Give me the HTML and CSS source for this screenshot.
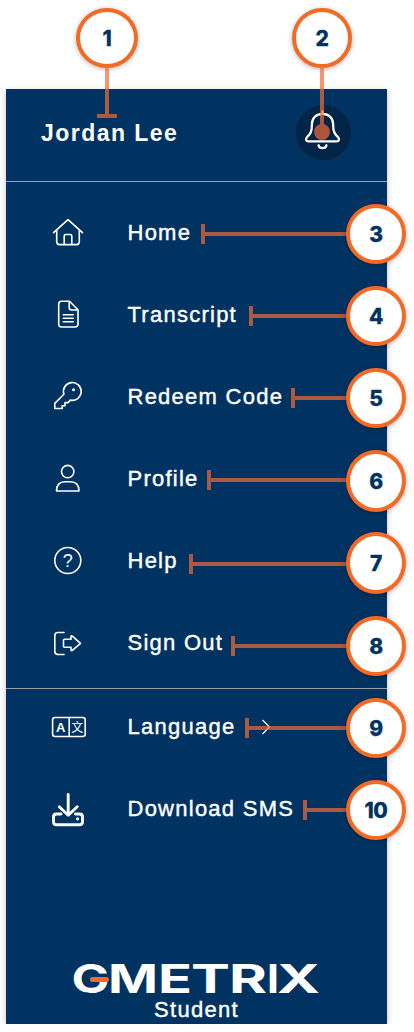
FILE: index.html
```html
<!DOCTYPE html>
<html lang="en">
<head>
  <meta charset="UTF-8" />
  <meta name="viewport" content="width=device-width, initial-scale=1.0"/>
  <title>GMetrix Student Menu</title>
  <link rel="stylesheet" href="styles.css">
</head>
<body>
  <aside class="sidebar">
    <header class="header">
      <h2 class="user-name">Jordan Lee</h2>
      <button type="button" class="bell-btn" aria-label="Notifications">
        <svg class="bell" viewBox="0 0 56 56">
          <path d="M27 6.500V9M27 9C20.500 9 16.200 13.500 16.200 19.500C16.200 27 15 29 11.500 32.500C9 35 10.500 37 12.500 37H41.500C43.500 37 45 35 42.500 32.500C39 29 37.800 27 37.800 19.500C37.800 13.500 33.500 9 27 9Z"/>
          <path d="M23 41C23.800 45 30.200 45 31 41"/>
        </svg>
      </button>
      <!-- Header callouts -->
      <div class="pin pin-name"><span class="num wide">1</span><span class="stem"></span></div>
      <div class="pin pin-bell"><span class="num">2</span><span class="stem"></span></div>
    </header>

    <nav class="menu">
      <a class="item" href="#">
        <svg class="icon" viewBox="0 0 36 36">
          <path d="M3.500 17.700L18 4.700L32.500 17.700M6.700 15V26.500Q6.700 29.600 9.800 29.600H26.200Q29.300 29.600 29.300 26.500V15M14.200 29.500V21Q14.200 19.500 15.700 19.500H20.300Q21.800 19.500 21.800 21V29.500"/>
        </svg>
        <span>Home</span>
        <div class="callout c-home"><i class="line"></i><span class="num">3</span></div>
      </a>
      <a class="item" href="#">
        <svg class="icon" viewBox="0 0 36 36">
          <path d="M11.500 4.200H19.500L28 12.700V27Q28 30 25 30H11.500Q8.700 30 8.700 27V7Q8.700 4.200 11.500 4.200ZM19.200 4.500V10.500Q19.200 13 21.700 13H27.700M13.300 17.800H23.200M13.300 21.300H23.200M13.300 24.800H23.200"/>
        </svg>
        <span>Transcript</span>
        <div class="callout c-transcript"><i class="line"></i><span class="num">4</span></div>
      </a>
      <a class="item" href="#">
        <svg class="icon" viewBox="0 0 36 36">
          <path d="M13.900 15.300L4.800 24.400V29.500H12.200V26.700H15V23.600H18L20.300 21.100A8.900 8.900 0 1 0 13.900 15.300Z"/>
          <circle class="dot" cx="23.500" cy="10.700" r="1.500"/>
        </svg>
        <span>Redeem Code</span>
        <div class="callout c-redeem"><i class="line"></i><span class="num">5</span></div>
      </a>
      <a class="item" href="#">
        <svg class="icon" viewBox="0 0 36 36">
          <circle cx="17.700" cy="10.600" r="6.200"/>
          <path d="M6.500 30C6.500 23.500 10 20.700 15 20.700H20.500C25.500 20.700 29 23.500 29 30Z"/>
        </svg>
        <span>Profile</span>
        <div class="callout c-profile"><i class="line"></i><span class="num tall">6</span></div>
      </a>
      <a class="item" href="#">
        <svg class="icon" viewBox="0 0 36 36">
          <circle cx="17.800" cy="17.500" r="13"/>
          <text class="mark" x="17.800" y="23.600">?</text>
        </svg>
        <span>Help</span>
        <div class="callout c-help"><i class="line"></i><span class="num tall">7</span></div>
      </a>
      <a class="item" href="#">
        <svg class="icon" viewBox="0 0 36 36">
          <path d="M14 7.500H8Q4.800 7.500 4.800 10.700V26.300Q4.800 29.500 8 29.500H14M14.500 14.300H21V12Q21 9.800 22.600 11.400L30.500 18.300L22.600 25.200Q21 26.700 21 24.500V22.300H14.500Q13.500 22.300 13.500 21.300V15.300Q13.500 14.300 14.500 14.300Z"/>
        </svg>
        <span>Sign Out</span>
        <div class="callout c-signout"><i class="line"></i><span class="num">8</span></div>
      </a>
    </nav>

    <nav class="menu extra">
      <a class="item" href="#">
        <svg class="icon" viewBox="0 0 36 36">
          <rect x="2.600" y="8.500" width="32.600" height="19" rx="2.500"/>
          <path d="M19.200 8.500V27.500"/>
          <text class="lang-a" x="10.800" y="22.800">A</text>
          <text class="lang-cjk" x="27.300" y="22.500">文</text>
        </svg>
        <span>Language</span>
        <svg class="chevron" viewBox="0 0 10 16"><path d="M1.500 1L8.500 8L1.500 15"/></svg>
        <div class="callout c-language"><i class="line"></i><span class="num">9</span></div>
      </a>
      <a class="item" href="#">
        <svg class="icon bold" viewBox="0 0 36 36">
          <path d="M18.200 3.500V24M9.300 15.700L18.200 24.300L27.200 15.700M11 23H6.500Q3.500 23 3.500 26V30.700Q3.500 33.700 6.500 33.700H29.500Q32.500 33.700 32.500 30.700V26Q32.500 23 29.500 23H25.500"/>
          <circle class="dot" cx="27.600" cy="27.800" r="1.600"/>
        </svg>
        <span>Download SMS</span>
        <div class="callout c-download"><i class="line"></i><span class="num">10</span></div>
      </a>
    </nav>

    <footer class="footer">
      <svg class="logo" viewBox="0 0 246 30">
        <text y="29"><tspan x="-2.500" textLength="38" lengthAdjust="spacingAndGlyphs">G</tspan><tspan x="34" textLength="50" lengthAdjust="spacingAndGlyphs">M</tspan><tspan x="84" textLength="34" lengthAdjust="spacingAndGlyphs">E</tspan><tspan x="117" textLength="39" lengthAdjust="spacingAndGlyphs">T</tspan><tspan x="155" textLength="38" lengthAdjust="spacingAndGlyphs">R</tspan><tspan x="193" textLength="12" lengthAdjust="spacingAndGlyphs">I</tspan><tspan x="203" textLength="43" lengthAdjust="spacingAndGlyphs">X</tspan></text>
        <rect class="logo-bar" x="16" y="13" width="19" height="5" rx="2.500"/>
      </svg>
      <span>Student</span>
    </footer>
  </aside>
</body>
</html>
```

FILE: styles.css
```css
body {
  font-family: "Liberation Sans", Arial, sans-serif;
  background: white;
  margin: 0;
  padding: 89px 0 0 6px;
}

.sidebar {
  width: 381px;
  height: 935px;
  background: #003362;
  color: white;
  box-shadow: 0 2px 6px rgba(0, 0, 0, 0.25);
  display: flex;
  flex-direction: column;
}

.header {
  height: 92px;
  position: relative;
  display: flex;
  justify-content: space-between;
  padding: 0 36px 0 35px;
  border-bottom: 1px solid #98a0a6;
}

.user-name {
  margin: 31px 0 0;
  font-size: 23px;
  line-height: 26px;
  letter-spacing: 1.45px;
}

.bell-btn {
  width: 55px;
  height: 55px;
  margin-top: 16px;
  padding: 0;
  border: none;
  border-radius: 50%;
  background: #022547;
}

.bell {
  display: block;
  width: 55px;
  height: 55px;
  fill: none;
  stroke: white;
  stroke-width: 2.3;
  stroke-linecap: round;
}

.menu {
  padding-top: 10px;
}

.extra {
  margin-top: 4px;
  padding-top: 0;
  border-top: 1px solid #98a0a6;
}

.item {
  position: relative;
  display: flex;
  align-items: center;
  height: 82px;
  padding-left: 44px;
  color: white;
  text-decoration: none;
  font-size: 22px;
  letter-spacing: 1.25px;
  -webkit-text-stroke: 0.4px white;
}

.extra .item:first-child {
  margin-top: -3px;
}

.icon {
  width: 36px;
  height: 36px;
  margin-right: 41.5px;
  overflow: visible;
  fill: none;
  stroke: white;
  stroke-width: 1.6;
  stroke-linejoin: round;
  stroke-linecap: round;
}

.icon.bold {
  stroke-width: 2.9;
}

.icon text {
  fill: white;
  stroke: none;
  letter-spacing: 0;
  text-anchor: middle;
  -webkit-text-stroke: 0;
}

.icon .dot {
  fill: white;
  stroke: none;
}

.icon .mark {
  font-size: 18px;
}

.icon .lang-a {
  font-size: 13px;
  font-weight: bold;
}

.icon .lang-cjk {
  font-family: "Noto Sans CJK SC", sans-serif;
  font-size: 12px;
}

.chevron {
  width: 10px;
  height: 16px;
  margin-left: 26px;
  fill: none;
  stroke: white;
  stroke-width: 1.2;
}

/* Numbered circles */
.num {
  position: relative;
  box-sizing: border-box;
  flex-shrink: 0;
  display: flex;
  align-items: center;
  justify-content: center;
  width: 60px;
  height: 60px;
  padding-top: 1px;
  border: 4px solid #f46a25;
  border-radius: 50%;
  background: white;
  box-shadow: 0 1px 5px rgba(0, 0, 0, 0.3);
  color: #003362;
  font-family: Inter, sans-serif;
  font-size: 21px;
  font-weight: 800;
  letter-spacing: -0.3px;
  -webkit-text-stroke: 0.3px #003362;
}

.num.wide {
  width: 62px;
}

.num.tall {
  height: 62px;
}

/* Callouts sit over the panel and hang off its right edge */
.callout {
  position: absolute;
  right: -19px;
  top: 12px;
  display: flex;
  align-items: flex-start;
}

.line {
  flex: 1;
  height: 4px;
  margin: 28px -3px 0 0;
  background: #f46a35;
  opacity: 0.7;
}

.line::before {
  content: "";
  display: block;
  width: 4px;
  height: 20px;
  margin-top: -8px;
  background: #f46a35;
}

.c-home { width: 205px; }
.c-transcript { width: 157px; }
.c-redeem { width: 115px; }
.c-profile { width: 199px; }
.c-help { width: 217px; }
.c-help .line { margin-top: 30px; }
.c-signout { width: 175px; top: 14px; }
.c-language { width: 161px; }
.c-download { width: 103px; }

.pin {
  position: absolute;
  top: -81px;
  display: flex;
  flex-direction: column;
  align-items: center;
}

.pin-name { left: 70px; }
.pin-bell { left: 286px; }

.stem {
  display: flex;
  flex-direction: column;
  align-items: center;
  width: 4px;
  height: 46px;
  background: #f46a35;
  opacity: 0.7;
}

.stem::after {
  content: "";
  flex-shrink: 0;
  width: 20px;
  height: 4px;
  margin-top: 46px;
  background: #f46a35;
}

.pin-bell .stem {
  height: 58px;
}

.pin-bell .stem::after {
  width: 16px;
  height: 16px;
  margin-top: 56px;
  border-radius: 50%;
}

.footer {
  margin-top: auto;
  padding-bottom: 2px;
  display: flex;
  flex-direction: column;
  align-items: center;
  font-size: 22px;
  line-height: 25px;
  letter-spacing: 1.3px;
  -webkit-text-stroke: 0.4px white;
}

.logo {
  width: 246px;
  height: 30px;
  margin-bottom: 3px;
  fill: white;
  font-family: Inter, sans-serif;
  font-size: 39px;
  font-weight: 700;
  letter-spacing: 0;
  overflow: visible;
}

.logo-bar {
  fill: #f46a25;
}
```
